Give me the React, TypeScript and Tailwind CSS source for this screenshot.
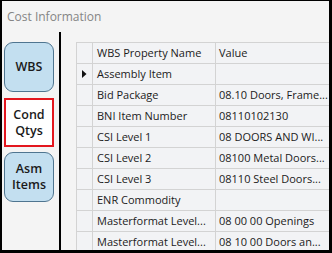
import React from 'react';

const rows: { name: string; value: string; current?: boolean }[] = [
  { name: 'Assembly Item', value: '', current: true },
  { name: 'Bid Package', value: '08.10 Doors, Frame...' },
  { name: 'BNI Item Number', value: '08110102130' },
  { name: 'CSI Level 1', value: '08 DOORS AND WI...' },
  { name: 'CSI Level 2', value: '08100 Metal Doors...' },
  { name: 'CSI Level 3', value: '08110 Steel Doors...' },
  { name: 'ENR Commodity', value: '' },
  { name: 'Masterformat Level...', value: '08 00 00 Openings' },
  { name: 'Masterformat Level...', value: '08 10 00 Doors an...' },
];

const SideButton: React.FC<{ top: string; bottom?: string; selected?: boolean }> = ({ top, bottom, selected }) => (
  <div
    className={
      selected
        ? 'w-[50px] h-[49px] border-2 border-[#e3161e] bg-white flex flex-col items-center justify-center text-[12.5px] leading-[16px] font-semibold text-[#1a1a1a]'
        : 'w-[50px] h-[50px] rounded-[9px] border border-[#4f7590] bg-[#c3dff0] flex flex-col items-center justify-center text-[12.5px] leading-[16px] font-semibold text-[#1a1a1a]'
    }
  >
    <span>{top}</span>
    {bottom && <span>{bottom}</span>}
  </div>
);

export default function App() {
  return (
    <div
      className="w-[332px] h-[253px] bg-black pl-[2px] pt-[1px] pr-[3px] pb-[3px] overflow-hidden"
      style={{ fontFamily: '"Open Sans", "Noto Sans", sans-serif' }}
    >
      <div className="w-full h-full bg-[#f4f4f4] flex flex-col overflow-hidden">
        <div className="h-[31px] shrink-0 flex items-center pl-[5px] text-[12px] text-[#858585]">Cost Information</div>
        <div className="flex flex-1 min-h-0">
          <div className="w-[57px] shrink-0 pl-[2px] pt-[10px] flex flex-col">
            <SideButton top="WBS" />
            <div className="h-[6px]" />
            <SideButton top="Cond" bottom="Qtys" selected />
            <div className="h-[5px]" />
            <SideButton top="Asm" bottom="Items" />
          </div>
          <div className="w-[2px] shrink-0 bg-black" />
          <div className="flex-1 min-w-0 pl-[15px] pt-[10px] overflow-hidden">
            <div className="w-[260px] bg-[#f2f3f5] border-t border-l border-[#d3d3d3] text-[11px] text-[#1b1b1b]">
              <div className="flex h-[21px] border-b border-[#d3d3d3]">
                <div className="w-[16px] shrink-0 border-r border-[#d3d3d3]" />
                <div className="w-[123px] shrink-0 border-r border-[#d3d3d3] pl-[4px] flex items-center whitespace-nowrap">WBS Property Name</div>
                <div className="flex-1 pl-[3px] flex items-center whitespace-nowrap">Value</div>
              </div>
              {rows.map((r, i) => (
                <div key={i} className="flex h-[21px] border-b border-[#d3d3d3]">
                  <div className="w-[16px] shrink-0 border-r border-[#d3d3d3] flex items-center justify-center">
                    {r.current && (
                      <svg width="5" height="8" viewBox="0 0 5 8">
                        <polygon points="0,0 4.5,4 0,8" fill="#111" />
                      </svg>
                    )}
                  </div>
                  <div className="w-[123px] shrink-0 border-r border-[#d3d3d3] pl-[4px] flex items-center whitespace-nowrap overflow-hidden">{r.name}</div>
                  <div className="flex-1 pl-[3px] flex items-center whitespace-nowrap overflow-hidden">{r.value}</div>
                </div>
              ))}
            </div>
          </div>
        </div>
      </div>
    </div>
  );
}
